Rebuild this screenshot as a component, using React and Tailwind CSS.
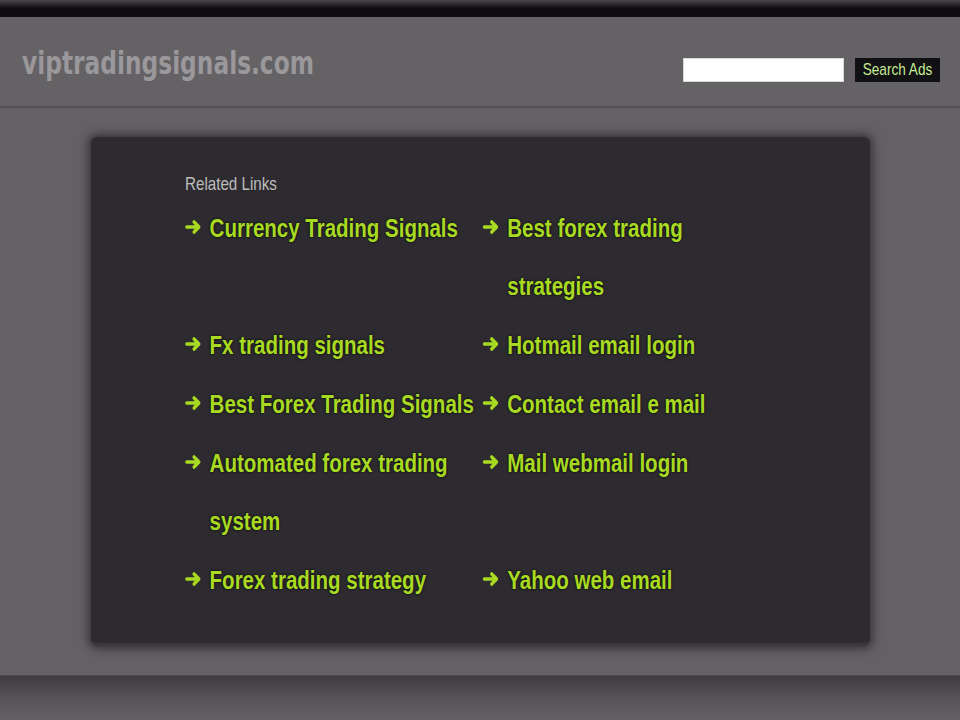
import React from 'react';

const arial = { fontFamily: '"Liberation Sans", Arial, sans-serif' };

const left = [
    'Currency Trading Signals',
    'Fx trading signals',
    'Best Forex Trading Signals',
    'Automated forex trading system',
    'Forex trading strategy',
];
const right = [
    'Best forex trading strategies',
    'Hotmail email login',
    'Contact email e mail',
    'Mail webmail login',
    'Yahoo web email',
];

function Arrow() {
    return (
        <svg width="20" height="14" viewBox="0 0 20 14" className="block">
            <path d="M2 7H16.5M11 2L17 7L11 12" fill="none" stroke="#a9da22" strokeWidth="3.6" strokeLinecap="round" strokeLinejoin="round" />
        </svg>
    );
}

function LinkItem({ label, width }) {
    return (
        <a href="#" className="flex items-start text-[#a9da22] font-bold text-[25px] leading-[58px] [text-shadow:0_0_3px_#000]" style={arial}>
            <span className="w-[30px] h-[58px] shrink-0 flex items-center pb-[3px]">
                <Arrow />
            </span>
            <span className={width}>{label}</span>
        </a>
    );
}

export default function App() {
    return (
        <div className="w-[960px] h-[720px] bg-[#636164] overflow-hidden flex flex-col">
            {/* top strip */}
            <div className="h-[17px] shrink-0 bg-gradient-to-b from-[#4a484c] via-[#0f0c10] to-[#0f0c10]" />

            {/* header */}
            <header className="h-[91px] shrink-0 bg-[#646265] border-b-2 border-[#525053] flex justify-between pl-[22px] pr-[20px]">
                <div
                    className="pt-[28px] text-[32px] leading-[37px] font-bold text-[#9a989b] whitespace-nowrap scale-x-[0.81] origin-top-left"
                    style={{ fontFamily: '"DejaVu Sans Condensed", "DejaVu Sans", sans-serif' }}
                >
                    viptradingsignals.com
                </div>
                <div className="flex items-start gap-[11px] pt-[41px]">
                    <input type="text" className="w-[161px] h-[24px] bg-white border border-[#d8d8d8] outline-none" />
                    <button className="w-[85px] h-[24px] bg-[#111012] flex items-center justify-center overflow-visible">
                        <span className="text-[#c6ec96] text-[17px] leading-[24px] whitespace-nowrap scale-x-[0.8]" style={arial}>
                            Search Ads
                        </span>
                    </button>
                </div>
            </header>

            {/* content */}
            <main className="h-[567px] shrink-0 pt-[29px] pl-[91px] pr-[90px]">
                <div className="h-[509px] bg-[#2e2b30] rounded-[6px] border-b-[3px] border-[#3a383c] shadow-[0_0_8px_3px_rgba(40,38,42,0.75)] pl-[94px] pt-[36px]">
                    <div className="scale-x-[0.82] origin-top-left w-[700px]">
                        <div className="text-[18.5px] leading-[22px] text-[#bcbcbc] mb-[4px]" style={arial}>Related Links</div>
                        <div className="grid grid-cols-[363px_340px] gap-y-[1px]">
                            {left.map((l, i) => (
                                <React.Fragment key={l}>
                                    <LinkItem label={l} width="w-[333px]" />
                                    <LinkItem label={right[i]} width="w-[280px]" />
                                </React.Fragment>
                            ))}
                        </div>
                    </div>
                </div>
            </main>

            {/* footer band */}
            <footer className="flex-1 bg-gradient-to-b from-[#3e3c40] via-[#555357] to-[#636164] border-t border-[#4a484c]" />
        </div>
    );
}
